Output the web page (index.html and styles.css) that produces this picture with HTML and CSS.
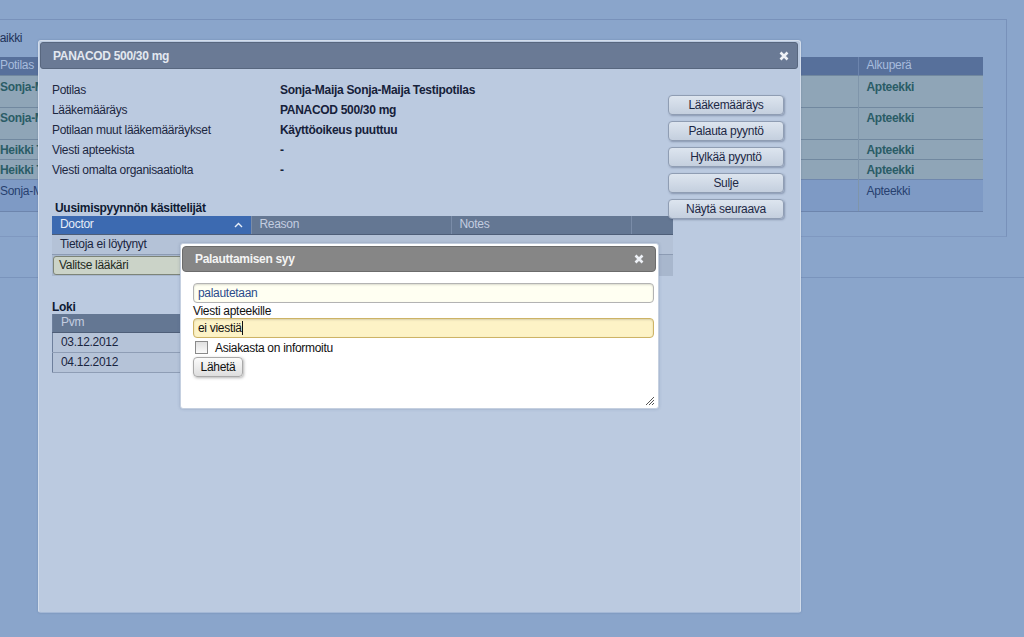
FILE: index.html
```html
<!DOCTYPE html>
<html lang="fi">
<head>
<meta charset="utf-8">
<title>PANACOD 500/30 mg</title>
<link rel="stylesheet" href="styles.css">
</head>
<body>
<div class="page">
  <div class="bg-panel">
    <div class="filter">Kaikki</div>
    <table class="bg-table">
      <thead>
        <tr><th class="c1">Potilas</th><th class="c2">Alkuperä</th></tr>
      </thead>
      <tbody>
        <tr class="r-tall"><td class="name"><span class="clip">Sonja-Maija Sonja-Maija Testipotilas</span></td><td class="org">Apteekki</td></tr>
        <tr class="r-tall second"><td class="name"><span class="clip">Sonja-Maija Sonja-Maija Testipotilas</span></td><td class="org">Apteekki</td></tr>
        <tr class="r-short"><td class="name"><span class="clip">Heikki Testipotilas</span></td><td class="org">Apteekki</td></tr>
        <tr class="r-short"><td class="name"><span class="clip">Heikki Testipotilas</span></td><td class="org">Apteekki</td></tr>
        <tr class="r-tall sel"><td class="name"><span class="clip">Sonja-Maija Sonja-Maija Testipotilas</span></td><td class="org">Apteekki</td></tr>
      </tbody>
    </table>
  </div>
  <div class="bg-band"></div>
</div>

<div class="dialog main-dialog">
  <div class="titlebar">
    <span class="title">PANACOD 500/30 mg</span>
    <svg class="close" width="10" height="10" viewBox="0 0 10 10"><path d="M1.5 1.5L8.5 8.5M8.5 1.5L1.5 8.5" /></svg>
  </div>
  <div class="main-body">
    <div class="left-col">
      <div class="info">
        <span class="lbl">Potilas</span><span class="val">Sonja-Maija Sonja-Maija Testipotilas</span>
        <span class="lbl">Lääkemääräys</span><span class="val">PANACOD 500/30 mg</span>
        <span class="lbl">Potilaan muut lääkemääräykset</span><span class="val">Käyttöoikeus puuttuu</span>
        <span class="lbl">Viesti apteekista</span><span class="val">-</span>
        <span class="lbl">Viesti omalta organisaatiolta</span><span class="val">-</span>
      </div>
      <div class="section-title handlers-title">Uusimispyynnön käsittelijät</div>
      <table class="grid handlers">
        <thead>
          <tr>
            <th class="sorted">Doctor<svg class="chev" width="9" height="6" viewBox="0 0 9 6"><path d="M1 5L4.5 1.5L8 5"/></svg></th>
            <th>Reason</th>
            <th>Notes</th>
            <th class="last"></th>
          </tr>
        </thead>
        <tbody>
          <tr class="row-a"><td colspan="4">Tietoja ei löytynyt</td></tr>
          <tr class="row-b"><td colspan="4"><span class="select">Valitse lääkäri</span></td></tr>
        </tbody>
      </table>
      <div class="section-title loki-title">Loki</div>
      <table class="grid loki">
        <thead><tr><th>Pvm</th></tr></thead>
        <tbody>
          <tr><td>03.12.2012</td></tr>
          <tr><td>04.12.2012</td></tr>
        </tbody>
      </table>
    </div>
    <div class="buttons">
      <button class="btn">Lääkemääräys</button>
      <button class="btn">Palauta pyyntö</button>
      <button class="btn">Hylkää pyyntö</button>
      <button class="btn">Sulje</button>
      <button class="btn">Näytä seuraava</button>
    </div>
  </div>
</div>

<div class="dialog sub-dialog">
  <div class="titlebar gray">
    <span class="title">Palauttamisen syy</span>
    <svg class="close" width="10" height="10" viewBox="0 0 10 10"><path d="M1.5 1.5L8.5 8.5M8.5 1.5L1.5 8.5" /></svg>
  </div>
  <div class="sub-body">
    <div class="input reason">palautetaan</div>
    <div class="field-label">Viesti apteekille</div>
    <div class="input msg">ei viestiä<span class="caret"></span></div>
    <label class="check"><span class="box"></span>Asiakasta on informoitu</label>
    <button class="send">Lähetä</button>
  </div>
  <svg class="grip" width="11" height="11" viewBox="0 0 11 11"><path d="M10 2L2 10M10 5L5 10M10 8L8 10"/></svg>
</div>
</body>
</html>
```
FILE: styles.css
```css
* { box-sizing: border-box; }
html, body {
  margin: 0;
  padding: 0;
  width: 1024px;
  height: 637px;
  overflow: hidden;
  background: #8aa5cb;
  font-family: "Liberation Sans", Arial, sans-serif;
  font-size: 12px;
  letter-spacing: -0.3px;
  color: #1b2640;
}

/* background page */
.page { width: 1024px; }
.bg-panel {
  margin-top: 19px;
  width: 1007px;
  height: 218px;
  border-top: 1px solid #7891ba;
  border-right: 1px solid #7891ba;
  border-bottom: 1px solid #7f98c0;
  overflow: hidden;
}
.filter {
  margin-left: -8px;
  padding-top: 11px;
  height: 37px;
  line-height: 14px;
  color: #1e3158;
}
.bg-table {
  margin-left: -4px;
  width: 987px;
  border-collapse: collapse;
  table-layout: fixed;
}
.bg-table th {
  height: 18px;
  background: #57709b;
  color: #a8bcdd;
  font-weight: normal;
  text-align: left;
  padding: 0 0 0 4px;
  line-height: 17px;
}
.bg-table th.c1 { width: 862px; }
.bg-table th.c2 { border-left: 1px solid #6c84ad; padding-left: 8px; }
.bg-table td {
  vertical-align: top;
  padding: 4px 0 0 4px;
  line-height: 14px;
  background: #8fa5b7;
  border-top: 1px solid #71889f;
  color: #2a5c66;
  font-weight: bold;
  white-space: nowrap;
  overflow: hidden;
}
.bg-table .clip {
  display: block;
  width: 38px;
  overflow: hidden;
}
.bg-table td.org { border-left: 1px solid #7f95aa; padding-left: 8px; }
.bg-table tr.r-tall td { height: 32px; }
.bg-table tr.second td { padding-top: 3px; }
.bg-table tr.r-short td { height: 20px; padding-top: 3px; }
.bg-table tr.sel td {
  background: #7e9ac5;
  color: #27406f;
  font-weight: normal;
  border-top: 1px solid #6f87ad;
  border-bottom: 1px solid #6d85ad;
}
.bg-band {
  height: 41px;
  border-bottom: 1px solid #7a94bc;
}

/* dialogs */
.dialog {
  position: absolute;
  display: flex;
  flex-direction: column;
}
.main-dialog {
  left: 38px;
  top: 40px;
  width: 763px;
  height: 573px;
  background: #bbcae0;
  border: 1px solid #d3ddeb;
  border-bottom-color: #a4b8d6;
  border-radius: 3px;
  box-shadow: 0 0 2px rgba(60, 80, 120, 0.35);
}
.titlebar {
  display: flex;
  align-items: center;
  justify-content: space-between;
  margin: 1px 2px 0 1px;
  height: 27px;
  padding: 0 8px 0 12px;
  background: #6a7a95;
  border: 1px solid #58677f;
  border-radius: 3px;
}
.titlebar .title {
  color: #e3e8f0;
  font-weight: bold;
  font-size: 12px;
}
.close path {
  stroke: #eef1f6;
  stroke-width: 2.6;
  fill: none;
}

.main-body {
  display: flex;
  padding: 11px 0 0 13px;
  flex: 1;
}
.left-col {
  width: 616px;
  flex: none;
}
.info {
  display: grid;
  grid-template-columns: 228px auto;
  grid-auto-rows: 20px;
  line-height: 20px;
  color: #1c2740;
}
.info .val { font-weight: bold; color: #16213a; }

.section-title {
  font-weight: bold;
  line-height: 14px;
  color: #0f1a33;
}
.handlers-title { margin-top: 21px; margin-bottom: 1px; padding-left: 3px; }
.loki-title { margin-top: 25px; line-height: 13px; }

.grid {
  border-collapse: collapse;
  table-layout: fixed;
}
.grid th {
  height: 18px;
  padding: 0 0 0 8px;
  background: #647793;
  color: #c3cde0;
  font-weight: normal;
  text-align: left;
  line-height: 17px;
  border-bottom: 1px solid #4e5e78;
  border-left: 1px solid #7a8ca8;
}
.grid td {
  height: 20px;
  padding: 0 0 0 8px;
  line-height: 19px;
  background: #b5c3d8;
  border-bottom: 1px solid #8e9db5;
  color: #1a2540;
}
.handlers { width: 621px; }
.handlers th:nth-child(1) { width: 199px; }
.handlers th:nth-child(2) { width: 200px; }
.handlers th:nth-child(3) { width: 180px; }
.handlers th.sorted {
  background: #3c6ab1;
  color: #e6edf8;
  border-left: none;
  position: relative;
}
.chev {
  position: absolute;
  right: 8px;
  top: 6px;
}
.chev path { stroke: #e9eff9; stroke-width: 1.4; fill: none; }
.handlers .row-a td { background: #b4c2d7; border-bottom: 1px solid #8c9bb3; }
.handlers .row-b td {
  height: 22px;
  padding: 0 0 0 1px;
  background: #a8b7cd;
  border-bottom: none;
}
.select {
  display: inline-block;
  width: 180px;
  height: 19px;
  line-height: 17px;
  padding-left: 5px;
  background: #cbd3c8;
  border: 1px solid #7d8478;
  border-radius: 3px;
  color: #1e2a22;
}
.loki { width: 300px; border-left: 1px solid #6d7f9c; }
.loki th { border-left: none; }

.buttons {
  display: flex;
  flex-direction: column;
  gap: 6px;
  margin-top: 15px;
  position: relative;
  z-index: 2;
}
.btn {
  width: 116px;
  height: 20px;
  padding: 0;
  font-family: "Liberation Sans", Arial, sans-serif;
  font-size: 12px;
  letter-spacing: -0.3px;
  color: #1d2845;
  background: linear-gradient(#dde5ef, #c4cfde);
  border: 1px solid #8f9db3;
  border-radius: 4px;
  box-shadow: 1px 1px 2px rgba(40, 55, 85, 0.35);
}

/* sub dialog */
.sub-dialog {
  left: 180px;
  top: 243px;
  width: 479px;
  height: 166px;
  background: #ffffff;
  border: 1px solid #c5d0e0;
  border-radius: 3px;
  box-shadow: 0 0 3px rgba(60, 80, 120, 0.3);
}
.sub-dialog .titlebar {
  margin: 2px 2px 0 1px;
  height: 26px;
  padding: 0 11px 0 12px;
  background: #868686;
  border: 1px solid #6c6c6c;
  border-radius: 4px;
}
.sub-dialog .title { color: #f4f4f4; }
.sub-body {
  display: flex;
  flex-direction: column;
  align-items: flex-start;
  padding: 11px 0 0 12px;
}
.input {
  width: 461px;
  height: 20px;
  line-height: 18px;
  padding-left: 4px;
  border: 1px solid #b3b3b3;
  border-radius: 4px;
  box-shadow: inset 0 1px 2px rgba(0, 0, 0, 0.15);
}
.input.reason { background: #fffff2; color: #2c4c8c; }
.input.msg {
  background: #fdf3c6;
  border-color: #cdb366;
  color: #111;
}
.caret {
  display: inline-block;
  width: 1px;
  height: 14px;
  background: #111;
  vertical-align: -3px;
}
.field-label {
  line-height: 14px;
  margin-top: 1px;
  color: #111;
}
.check {
  display: flex;
  align-items: center;
  height: 17px;
  margin-top: 1px;
  color: #111;
}
.check .box {
  width: 13px;
  height: 13px;
  margin: 0 7px 0 2px;
  border: 1px solid #8a8a8a;
  background: linear-gradient(#e0e0e0, #fafafa);
}
.send {
  margin-top: 1px;
  width: 50px;
  height: 20px;
  padding: 0;
  font-family: "Liberation Sans", Arial, sans-serif;
  font-size: 12px;
  letter-spacing: -0.3px;
  color: #111;
  background: linear-gradient(#fbfbfb, #dedede);
  border: 1px solid #a9a9a9;
  border-radius: 4px;
  box-shadow: 1px 1px 3px rgba(0, 0, 0, 0.3);
}
.grip {
  position: absolute;
  right: 3px;
  bottom: 2px;
}
.grip path { stroke: #555; stroke-width: 1; fill: none; }
```
